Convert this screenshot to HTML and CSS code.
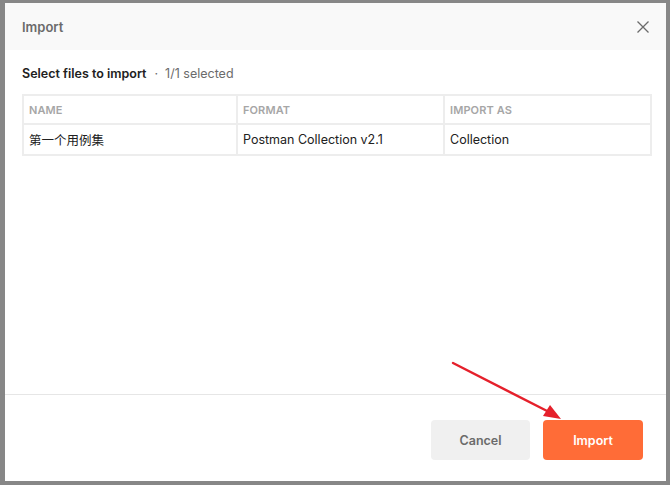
FILE: index.html
```html
<!DOCTYPE html>
<html>
<head>
<meta charset="utf-8">
<link rel="stylesheet" href="styles.css">
</head>
<body>
<div class="backdrop">
  <div class="modal">
    <div class="modal-header">
      <span class="modal-title">Import</span>
      <svg class="close" width="14" height="14" viewBox="0 0 14 14"><path d="M1.5 1.5 L12.5 12.5 M12.5 1.5 L1.5 12.5" stroke="#6b6b6b" stroke-width="1.3" fill="none"/></svg>
    </div>
    <div class="modal-body">
      <div class="subtitle"><span class="strong">Select files to import</span><span class="dot">·</span><span class="count">1/1 selected</span></div>
      <table class="files">
        <colgroup><col class="c1"><col class="c2"><col class="c3"></colgroup>
        <thead>
          <tr><th>NAME</th><th>FORMAT</th><th>IMPORT AS</th></tr>
        </thead>
        <tbody>
          <tr><td>第一个用例集</td><td>Postman Collection v2.1</td><td>Collection</td></tr>
        </tbody>
      </table>
    </div>
    <div class="modal-footer">
      <button class="btn btn-secondary">Cancel</button>
      <button class="btn btn-primary">Import</button>
    </div>
    <svg class="arrow" width="140" height="80" viewBox="0 0 140 80">
      <line x1="8" y1="5" x2="108" y2="56" stroke="#e5202b" stroke-width="2.4" stroke-linecap="round"/>
      <path d="M116 61 L98 58 L105 47 Z" fill="#e5202b"/>
    </svg>
  </div>
</div>
</body>
</html>
```
FILE: styles.css
```css
* { box-sizing: border-box; }
html, body { margin: 0; padding: 0; }
body {
  width: 670px;
  height: 485px;
  background: #878787;
  font-family: Inter, "Noto Sans CJK SC", sans-serif;
  overflow: hidden;
}
.backdrop {
  padding: 3px 4px 4px 5px;
  height: 485px;
}
.modal {
  position: relative;
  width: 661px;
  height: 478px;
  background: #ffffff;
  display: flex;
  flex-direction: column;
}
.modal-header {
  height: 47px;
  background: #f9f9f9;
  display: flex;
  align-items: center;
  justify-content: space-between;
  padding: 0 16px 0 17px;
}
.modal-title {
  font-size: 13px;
  font-weight: 600;
  color: #6b6b6b;
}
.close { display: block; }
.modal-body {
  flex: 1;
  padding: 15px 16px 0 17px;
}
.subtitle {
  font-size: 12.5px;
  line-height: 18px;
  color: #212121;
  margin-bottom: 11px;
}
.strong { font-weight: 600; }
.dot { color: #6b6b6b; margin: 0 7px 0 8px; }
.count { color: #6b6b6b; }
.files {
  border-collapse: collapse;
  width: 628px;
  table-layout: fixed;
}
.c1 { width: 214px; }
.c2 { width: 207px; }
.c3 { width: 207px; }
.files th, .files td {
  border: 2px solid #ededed;
  text-align: left;
  padding: 0 5px;
}
.files th {
  height: 29px;
  font-size: 11px;
  font-weight: 600;
  color: #a6a6a6;
  letter-spacing: 0.1px;
}
.files td {
  height: 31px;
  font-size: 12.5px;
  color: #212121;
}
.modal-footer {
  border-top: 1px solid #e6e6e6;
  height: 87px;
  display: flex;
  justify-content: flex-end;
  align-items: flex-start;
  gap: 13px;
  padding: 25px 23px 0 0;
}
.btn {
  width: 100px;
  height: 40px;
  border: none;
  border-radius: 4px;
  font-family: Inter, sans-serif;
  font-size: 12.5px;
  font-weight: 600;
}
.btn-secondary {
  width: 99px;
  background: #f0f0f0;
  color: #6b6b6b;
}
.btn-primary {
  background: #ff6c37;
  color: #ffffff;
}
.arrow {
  position: absolute;
  left: 440px;
  top: 355px;
}
```
